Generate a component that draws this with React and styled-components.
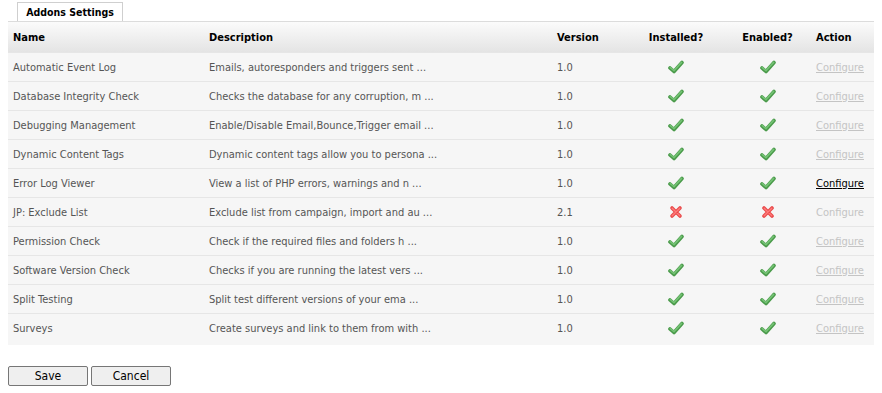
import React from "react";
import styled, { createGlobalStyle } from "styled-components";

const FONT = `"DejaVu Sans Condensed", "DejaVu Sans", Verdana, sans-serif`;

const Global = createGlobalStyle`
  body { margin: 2px 8px 8px; background: #fff; font-family: ${FONT}; font-size: 11px; }
`;

const TabBar = styled.div`
  display: flex;
  padding-left: 9px;
  border-bottom: 1px solid #dcdcdc;
`;
const Tab = styled.div`
  width: 106px;
  height: 19px;
  border: 1px solid #cfcfcf;
  border-bottom: none;
  background: #fff;
  font-weight: bold;
  font-size: 10.5px;
  color: #000;
  display: flex;
  align-items: center;
  justify-content: center;
  box-sizing: border-box;
`;

const Table = styled.table`
  width: 873px;
  border-collapse: collapse;
  table-layout: fixed;
`;
const HeadCell = styled.th`
  height: 30px;
  padding: 1px 5px 0;
  padding-left: ${(p) => p.$pl || 5}px;
  text-align: ${(p) => p.$align || "left"};
  font-weight: bold;
  color: #000;
  font-size: 11px;
  background: linear-gradient(#fbfbfb, #e4e4e4);
  box-sizing: border-box;
`;
const Row = styled.tr`
  background: #f6f6f6;
  border-top: 1px solid #e6e6e6;
  &:last-child td {
    padding-bottom: 3px;
  }
`;
const Cell = styled.td`
  height: 27px;
  padding: 1px 5px 0;
  padding-left: ${(p) => p.$pl || 5}px;
  color: #555;
  text-align: ${(p) => p.$align || "left"};
  white-space: nowrap;
  overflow: hidden;
`;
const Link = styled.a`
  color: ${(p) => (p.$active ? "#000" : "#c4c4c4")};
  text-decoration: ${(p) => (p.$underline ? "underline" : "none")};
  cursor: pointer;
`;
const Buttons = styled.div`
  display: flex;
  gap: 3px;
  margin-top: 21px;
`;
const Button = styled.button`
  width: 80px;
  height: 20px;
  border: 1px solid #767676;
  border-radius: 2px;
  background: #efefef;
  font-family: ${FONT};
  font-size: 12px;
  color: #000;
  padding: 0;
`;

const Check = () => (
  <svg width="16" height="14" viewBox="0 0 16 14">
    <path d="M2 8 L6 11.5 L14 2.5" fill="none" stroke="#4a9a4a" strokeWidth="3.6" strokeLinecap="round" strokeLinejoin="round" />
    <path d="M2.3 7.6 L6 10.6 L13.6 2.4" fill="none" stroke="#74c274" strokeWidth="1.6" strokeLinecap="round" strokeLinejoin="round" />
  </svg>
);
const Cross = () => (
  <svg width="14" height="14" viewBox="0 0 14 14">
    <path d="M3 3 L11 11 M11 3 L3 11" fill="none" stroke="#e84a4a" strokeWidth="3.6" strokeLinecap="round" />
    <path d="M3.2 3.2 L10.8 10.8 M10.8 3.2 L3.2 10.8" fill="none" stroke="#ff7a7a" strokeWidth="1.4" strokeLinecap="round" />
  </svg>
);

const rows = [
  ["Automatic Event Log", "Emails, autoresponders and triggers sent ...", "1.0", true, false],
  ["Database Integrity Check", "Checks the database for any corruption, m ...", "1.0", true, false],
  ["Debugging Management", "Enable/Disable Email,Bounce,Trigger email ...", "1.0", true, false],
  ["Dynamic Content Tags", "Dynamic content tags allow you to persona ...", "1.0", true, false],
  ["Error Log Viewer", "View a list of PHP errors, warnings and n ...", "1.0", true, true],
  ["JP: Exclude List", "Exclude list from campaign, import and au ...", "2.1", false, false],
  ["Permission Check", "Check if the required files and folders h ...", "1.0", true, false],
  ["Software Version Check", "Checks if you are running the latest vers ...", "1.0", true, false],
  ["Split Testing", "Split test different versions of your ema ...", "1.0", true, false],
  ["Surveys", "Create surveys and link to them from with ...", "1.0", true, false],
];

const IconWrap = styled.span`
  display: inline-flex;
  vertical-align: middle;
`;

export default function App() {
  return (
    <>
      <Global />
      <TabBar>
        <Tab>Addons Settings</Tab>
      </TabBar>
      <Table>
        <colgroup>
          <col style={{ width: 196 }} />
          <col style={{ width: 348 }} />
          <col style={{ width: 72 }} />
          <col style={{ width: 104 }} />
          <col style={{ width: 79 }} />
          <col style={{ width: 74 }} />
        </colgroup>
        <thead>
          <tr>
            <HeadCell>Name</HeadCell>
            <HeadCell>Description</HeadCell>
            <HeadCell>Version</HeadCell>
            <HeadCell $align="center">Installed?</HeadCell>
            <HeadCell $align="center">Enabled?</HeadCell>
            <HeadCell $pl={9}>Action</HeadCell>
          </tr>
        </thead>
        <tbody>
          {rows.map(([name, desc, ver, ok, active]) => (
            <Row key={name}>
              <Cell>{name}</Cell>
              <Cell>{desc}</Cell>
              <Cell>{ver}</Cell>
              <Cell $align="center"><IconWrap>{ok ? <Check /> : <Cross />}</IconWrap></Cell>
              <Cell $align="center"><IconWrap>{ok ? <Check /> : <Cross />}</IconWrap></Cell>
              <Cell $pl={9}>
                <Link $active={active} $underline={ok}>Configure</Link>
              </Cell>
            </Row>
          ))}
        </tbody>
      </Table>
      <Buttons>
        <Button>Save</Button>
        <Button>Cancel</Button>
      </Buttons>
    </>
  );
}
